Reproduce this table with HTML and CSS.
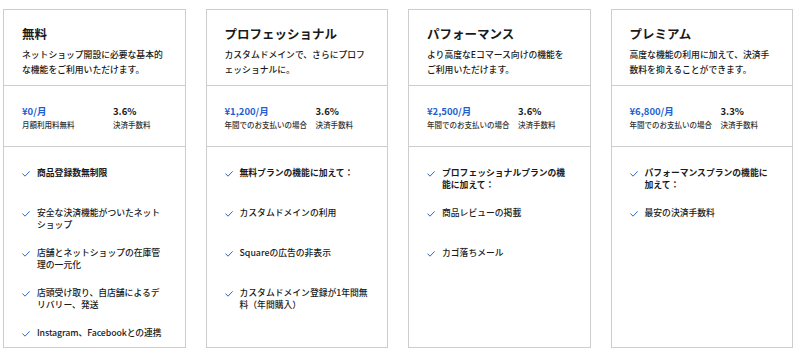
FILE: index.html
```html
<!DOCTYPE html>
<html lang="ja">
<head>
<meta charset="utf-8">
<link rel="stylesheet" href="styles.css">
</head>
<body>
<div class="plans">
  <div class="card">
    <div class="head">
      <h2 class="title">無料</h2>
      <p class="desc">ネットショップ開設に必要な基本的な機能をご利用いただけます。</p>
    </div>
    <div class="price">
      <div class="col"><div class="amount">¥0/月</div><div class="sub">月額利用料無料</div></div>
      <div class="col"><div class="fee">3.6%</div><div class="sub">決済手数料</div></div>
    </div>
    <ul class="features">
      <li class="strong"><span class="check"><svg viewBox="0 0 8 6" width="8" height="6"><polyline points="0.5,2.6 3,5.2 7.6,0.4"/></svg></span><span>商品登録数無制限</span></li>
      <li><span class="check"><svg viewBox="0 0 8 6" width="8" height="6"><polyline points="0.5,2.6 3,5.2 7.6,0.4"/></svg></span><span>安全な決済機能がついたネットショップ</span></li>
      <li><span class="check"><svg viewBox="0 0 8 6" width="8" height="6"><polyline points="0.5,2.6 3,5.2 7.6,0.4"/></svg></span><span>店舗とネットショップの在庫管理の一元化</span></li>
      <li><span class="check"><svg viewBox="0 0 8 6" width="8" height="6"><polyline points="0.5,2.6 3,5.2 7.6,0.4"/></svg></span><span>店頭受け取り、自店舗によるデリバリー、発送</span></li>
      <li><span class="check"><svg viewBox="0 0 8 6" width="8" height="6"><polyline points="0.5,2.6 3,5.2 7.6,0.4"/></svg></span><span class="nowrap">Instagram、Facebookとの連携</span></li>
    </ul>
  </div>
  <div class="card">
    <div class="head">
      <h2 class="title">プロフェッショナル</h2>
      <p class="desc">カスタムドメインで、さらにプロフェッショナルに。</p>
    </div>
    <div class="price">
      <div class="col"><div class="amount">¥1,200/月</div><div class="sub">年間でのお支払いの場合</div></div>
      <div class="col"><div class="fee">3.6%</div><div class="sub">決済手数料</div></div>
    </div>
    <ul class="features">
      <li class="strong"><span class="check"><svg viewBox="0 0 8 6" width="8" height="6"><polyline points="0.5,2.6 3,5.2 7.6,0.4"/></svg></span><span>無料プランの機能に加えて：</span></li>
      <li><span class="check"><svg viewBox="0 0 8 6" width="8" height="6"><polyline points="0.5,2.6 3,5.2 7.6,0.4"/></svg></span><span>カスタムドメインの利用</span></li>
      <li><span class="check"><svg viewBox="0 0 8 6" width="8" height="6"><polyline points="0.5,2.6 3,5.2 7.6,0.4"/></svg></span><span>Squareの広告の非表示</span></li>
      <li><span class="check"><svg viewBox="0 0 8 6" width="8" height="6"><polyline points="0.5,2.6 3,5.2 7.6,0.4"/></svg></span><span>カスタムドメイン登録が1年間無料（年間購入）</span></li>
    </ul>
  </div>
  <div class="card">
    <div class="head">
      <h2 class="title">パフォーマンス</h2>
      <p class="desc">より高度なEコマース向けの機能をご利用いただけます。</p>
    </div>
    <div class="price">
      <div class="col"><div class="amount">¥2,500/月</div><div class="sub">年間でのお支払いの場合</div></div>
      <div class="col"><div class="fee">3.6%</div><div class="sub">決済手数料</div></div>
    </div>
    <ul class="features">
      <li class="strong"><span class="check"><svg viewBox="0 0 8 6" width="8" height="6"><polyline points="0.5,2.6 3,5.2 7.6,0.4"/></svg></span><span>プロフェッショナルプランの機能に加えて：</span></li>
      <li><span class="check"><svg viewBox="0 0 8 6" width="8" height="6"><polyline points="0.5,2.6 3,5.2 7.6,0.4"/></svg></span><span>商品レビューの掲載</span></li>
      <li><span class="check"><svg viewBox="0 0 8 6" width="8" height="6"><polyline points="0.5,2.6 3,5.2 7.6,0.4"/></svg></span><span>カゴ落ちメール</span></li>
    </ul>
  </div>
  <div class="card">
    <div class="head">
      <h2 class="title">プレミアム</h2>
      <p class="desc">高度な機能の利用に加えて、決済手数料を抑えることができます。</p>
    </div>
    <div class="price">
      <div class="col"><div class="amount">¥6,800/月</div><div class="sub">年間でのお支払いの場合</div></div>
      <div class="col"><div class="fee">3.3%</div><div class="sub">決済手数料</div></div>
    </div>
    <ul class="features">
      <li class="strong"><span class="check"><svg viewBox="0 0 8 6" width="8" height="6"><polyline points="0.5,2.6 3,5.2 7.6,0.4"/></svg></span><span>パフォーマンスプランの機能に加えて：</span></li>
      <li><span class="check"><svg viewBox="0 0 8 6" width="8" height="6"><polyline points="0.5,2.6 3,5.2 7.6,0.4"/></svg></span><span>最安の決済手数料</span></li>
    </ul>
  </div>
</div>
</body>
</html>
```
FILE: styles.css
```css
* { box-sizing: border-box; }
html, body { margin: 0; padding: 0; background: #fff; }
body {
  font-family: "Noto Sans CJK JP", "Noto Sans", sans-serif;
  color: #1a1a1a;
}
.plans {
  display: grid;
  grid-template-columns: repeat(4, 1fr);
  column-gap: 20px;
  width: 790px;
  margin: 9px 0 0 3px;
}
.card {
  border: 1px solid #cdcdcd;
  height: 339px;
  display: flex;
  flex-direction: column;
  overflow: hidden;
}
.head {
  flex: none;
  height: 76px;
  padding: 16px 18px 0 18px;
  border-bottom: 1px solid #cdcdcd;
}
.title {
  margin: 0;
  font-size: 12.5px;
  line-height: 16px;
  font-weight: 700;
}
.desc {
  margin: 5px 0 0 0;
  font-size: 8.8px;
  line-height: 15px;
  font-weight: 500;
}
.price {
  flex: none;
  height: 61px;
  border-bottom: 1px solid #cdcdcd;
  display: grid;
  grid-template-columns: 91px auto;
  align-content: start;
  padding: 19px 0 0 18px;
}
.amount {
  color: #1f5fd1;
  font-size: 9.5px;
  line-height: 13px;
  font-weight: 700;
}
.fee {
  font-size: 9.5px;
  line-height: 13px;
  font-weight: 700;
}
.sub {
  font-size: 7.5px;
  line-height: 13px;
  color: #333;
  font-weight: 500;
}
.features {
  flex: 1 0 auto;
  list-style: none;
  margin: 0;
  padding: 20px 17px 0 18px;
}
.features li {
  display: flex;
  align-items: flex-start;
  gap: 7px;
  min-height: 40px;
  font-size: 8.8px;
  line-height: 12px;
  font-weight: 500;
}
.features li.strong { font-weight: 700; }
.nowrap { white-space: nowrap; letter-spacing: -0.1px; }
.check {
  flex: none;
  width: 8px;
  height: 12px;
  display: flex;
  align-items: center;
  padding-top: 2px;
}
.check svg polyline {
  fill: none;
  stroke: #2a68d4;
  stroke-width: 1;
}
```
